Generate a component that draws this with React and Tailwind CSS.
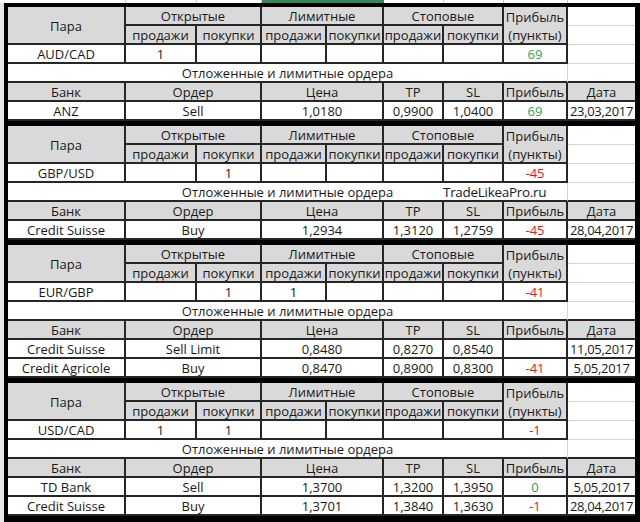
import React from 'react';

const GREEN = 'text-[#2ba352]';
const RED = 'text-[#f01010]';

const blocks = [
    {
        pair: 'AUD/CAD',
        counts: ['1', '', '', '', '', ''],
        profit: { v: '69', c: GREEN },
        orders: [
            { bank: 'ANZ', order: 'Sell', price: '1,0180', tp: '0,9900', sl: '1,0400', profit: { v: '69', c: GREEN }, date: '23,03,2017' }
        ]
    },
    {
        pair: 'GBP/USD',
        counts: ['', '1', '', '', '', ''],
        profit: { v: '-45', c: RED },
        watermark: true,
        orders: [
            { bank: 'Credit Suisse', order: 'Buy', price: '1,2934', tp: '1,3120', sl: '1,2759', profit: { v: '-45', c: RED }, date: '28,04,2017' }
        ]
    },
    {
        pair: 'EUR/GBP',
        counts: ['', '1', '1', '', '', ''],
        profit: { v: '-41', c: RED },
        orders: [
            { bank: 'Credit Suisse', order: 'Sell Limit', price: '0,8480', tp: '0,8270', sl: '0,8540', profit: { v: '', c: RED }, date: '11,05,2017' },
            { bank: 'Credit Agricole', order: 'Buy', price: '0,8470', tp: '0,8900', sl: '0,8300', profit: { v: '-41', c: RED }, date: '5,05,2017' }
        ]
    },
    {
        pair: 'USD/CAD',
        counts: ['1', '1', '', '', '', ''],
        profit: { v: '-1', c: RED },
        orders: [
            { bank: 'TD Bank', order: 'Sell', price: '1,3700', tp: '1,3200', sl: '1,3950', profit: { v: '0', c: GREEN }, date: '5,05,2017' },
            { bank: 'Credit Suisse', order: 'Buy', price: '1,3701', tp: '1,3840', sl: '1,3630', profit: { v: '-1', c: RED }, date: '28,04,2017' }
        ]
    }
];

const sub = ['продажи', 'покупки', 'продажи', 'покупки', 'продажи', 'покупки'];

// bordered cell, grey header or white body
const Cell = ({ children, head, span = '', last, className = '' }) => (
    <div
        className={`flex items-center justify-center pt-[2px] whitespace-nowrap border-b-2 border-[#262626] ${last ? '' : 'border-r-2'} ${head ? 'bg-[#d9d9d9]' : 'bg-white'} ${span} ${className}`}
    >
        {children}
    </div>
);

const Blank = ({ dark }) => (
    <div className={`bg-white border-b ${dark ? 'border-b-2 border-[#262626]' : 'border-[#d4d4d4]'}`} />
);

const Block = ({ block }) => (
    <div className="relative grid grid-cols-[118px_71px_65px_65px_57px_60px_60px_64px_67px] auto-rows-[19px] bg-white">
        <Cell head span="row-span-2">Пара</Cell>
        <Cell head span="col-span-2">Открытые</Cell>
        <Cell head span="col-span-2">Лимитные</Cell>
        <Cell head span="col-span-2">Стоповые</Cell>
        <Cell head span="row-span-2 flex-col">
            <span className="leading-[18px]">Прибыль</span>
            <span className="leading-[18px]">(пункты)</span>
        </Cell>
        <Blank />
        {sub.map((s, i) => (
            <Cell key={i} head>{s}</Cell>
        ))}
        <Blank />

        <Cell>{block.pair}</Cell>
        {block.counts.map((c, i) => (
            <Cell key={i}>{c}</Cell>
        ))}
        <Cell className={block.profit.c}>{block.profit.v}</Cell>
        <Blank />

        <div className="col-span-8 relative flex items-center justify-center pt-[2px] bg-white border-b-2 border-b-[#262626] border-r border-r-[#d4d4d4]">
            Отложенные и лимитные ордера
            {block.watermark && (
                <span className="absolute left-[435px] top-[1px] text-[13.5px] leading-[17px] tracking-[-0.3px]">TradeLikeaPro.ru</span>
            )}
        </div>
        <Blank dark />

        <Cell head>Банк</Cell>
        <Cell head span="col-span-2">Ордер</Cell>
        <Cell head span="col-span-2">Цена</Cell>
        <Cell head>TP</Cell>
        <Cell head>SL</Cell>
        <Cell head>Прибыль</Cell>
        <Cell head last>Дата</Cell>

        {block.orders.map((o, i) => (
            <React.Fragment key={i}>
                <Cell>{o.bank}</Cell>
                <Cell span="col-span-2">{o.order}</Cell>
                <Cell span="col-span-2">{o.price}</Cell>
                <Cell>{o.tp}</Cell>
                <Cell>{o.sl}</Cell>
                <Cell className={o.profit.c}>{o.profit.v}</Cell>
                <Cell last className="tracking-[-0.3px]">{o.date}</Cell>
            </React.Fragment>
        ))}
    </div>
);

const App = () => (
    <div
        className="w-[640px] h-[522px] overflow-hidden bg-white text-[13px] text-[#1a1a1a] leading-none"
        style={{ fontFamily: '"Open Sans", "Noto Sans", sans-serif' }}
    >
        {/* column header remnant of the sheet */}
        <div className="flex h-[3px]">
            <div className="w-[126px] border-r border-[#cfcfcf]" />
            <div className="w-[71px] border-r border-[#cfcfcf]" />
            <div className="w-[65px] border-r border-[#cfcfcf]" />
            <div className="w-[122px] bg-[#2f8a57]" />
            <div className="w-[60px] border-r border-[#cfcfcf]" />
            <div className="w-[60px] border-r border-[#cfcfcf]" />
            <div className="w-[64px] border-r border-[#cfcfcf]" />
            <div className="flex-1" />
        </div>
        <div className="flex h-[519px]">
            <div className="w-[4px] bg-[#e6e6e6]" />
            <div className="flex-1 flex flex-col gap-[5px] bg-black pl-[4px] pr-[5px] pt-[4px]">
                {blocks.map((b, i) => (
                    <Block key={i} block={b} />
                ))}
            </div>
        </div>
    </div>
);

export default App;
